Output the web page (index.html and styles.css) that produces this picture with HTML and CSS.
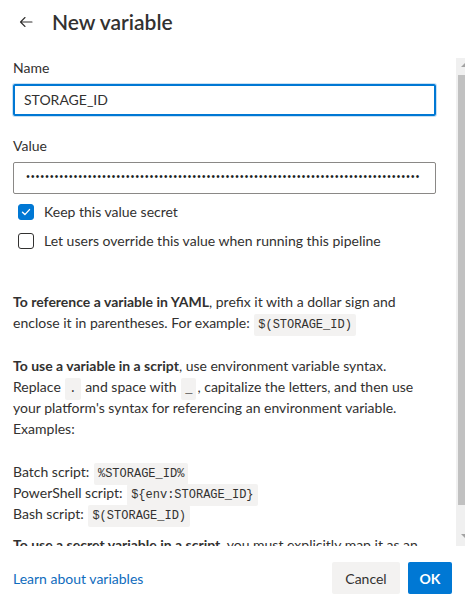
FILE: index.html
```html
<!DOCTYPE html>
<html>
<head>
<meta charset="utf-8">
<link rel="stylesheet" href="styles.css">
</head>
<body>
<div class="panel">
  <header class="header">
    <span class="back"><svg width="14" height="12" viewBox="0 0 14 12"><path d="M13 6 H1.5 M6 1.5 L1.5 6 L6 10.5" fill="none" stroke="#323130" stroke-width="1.1" stroke-linecap="round" stroke-linejoin="round"/></svg></span>
    <h1 class="title">New variable</h1>
  </header>
  <div class="body">
    <main class="scroll">
      <div class="field">
        <label class="label">Name</label>
        <div class="input focused">STORAGE_ID</div>
      </div>
      <div class="field">
        <label class="label">Value</label>
        <div class="input dots">&bull;&bull;&bull;&bull;&bull;&bull;&bull;&bull;&bull;&bull;&bull;&bull;&bull;&bull;&bull;&bull;&bull;&bull;&bull;&bull;&bull;&bull;&bull;&bull;&bull;&bull;&bull;&bull;&bull;&bull;&bull;&bull;&bull;&bull;&bull;&bull;&bull;&bull;&bull;&bull;&bull;&bull;&bull;&bull;&bull;&bull;&bull;&bull;&bull;&bull;&bull;&bull;&bull;&bull;&bull;&bull;&bull;&bull;&bull;&bull;&bull;&bull;&bull;&bull;&bull;&bull;&bull;&bull;&bull;&bull;&bull;&bull;&bull;&bull;&bull;&bull;&bull;&bull;&bull;&bull;&bull;&bull;&bull;</div>
      </div>
      <div class="checks">
        <div class="check">
          <span class="box checked"><svg width="12" height="12" viewBox="0 0 12 12"><path d="M2.5 6.3 L4.9 8.6 L9.5 3.6" fill="none" stroke="#fff" stroke-width="1.4" stroke-linecap="round" stroke-linejoin="round"/></svg></span>
          <span>Keep this value secret</span>
        </div>
        <div class="check">
          <span class="box"></span>
          <span>Let users override this value when running this pipeline</span>
        </div>
      </div>
      <div class="help">
        <p><b>To reference a variable in YAML</b>, prefix it with a dollar sign and enclose it in parentheses. For example: <code>$(STORAGE_ID)</code></p>
        <p><b>To use a variable in a script</b>, use environment variable syntax. Replace <code>.</code> and space with <code>_</code>, capitalize the letters, and then use your platform's syntax for referencing an environment variable. Examples:</p>
        <p class="examples">Batch script: <code>%STORAGE_ID%</code><br>PowerShell script: <code>${env:STORAGE_ID}</code><br>Bash script: <code>$(STORAGE_ID)</code></p>
        <p><b>To use a secret variable in a script</b>, you must explicitly map it as an environment variable.</p>
      </div>
    </main>
    <div class="scrollbar">
      <span class="arrow up"></span>
      <span class="thumb"></span>
      <span class="arrow down"></span>
    </div>
  </div>
  <footer class="footer">
    <a class="link" href="#">Learn about variables</a>
    <div class="buttons">
      <button class="btn cancel">Cancel</button>
      <button class="btn primary">OK</button>
    </div>
  </footer>
</div>
</body>
</html>
```
FILE: styles.css
```css
html, body {
  margin: 0;
  padding: 0;
  background: #fff;
}
body {
  font-family: "Segoe UI", Lato, sans-serif;
  font-size: 14px;
  color: #323130;
}
.panel {
  width: 465px;
  height: 603px;
  display: flex;
  flex-direction: column;
}
.header {
  height: 58px;
  flex: none;
  display: flex;
  align-items: flex-start;
  padding: 7px 0 0 19px;
  box-sizing: border-box;
}
.back {
  width: 33px;
  height: 30px;
  display: flex;
  align-items: center;
}
.back svg {
  display: block;
}
.title {
  margin: 0;
  font-size: 21px;
  font-weight: 600;
  line-height: 30px;
}
.body {
  height: 488px;
  flex: none;
  display: flex;
}
.scroll {
  flex: 1;
  overflow: hidden;
  padding: 0 20px 0 13px;
}
.scrollbar {
  width: 9px;
  flex: none;
  background: #f0f0f0;
  display: flex;
  flex-direction: column;
  align-items: flex-end;
}
.arrow {
  width: 0;
  height: 0;
  border-left: 4px solid transparent;
}
.arrow.up {
  margin-top: 5px;
  border-bottom: 4px solid #a3a3a3;
}
.arrow.down {
  margin-top: 29px;
  border-top: 4px solid #a3a3a3;
}
.thumb {
  margin-top: 8px;
  width: 7px;
  height: 430px;
  background: #c1c1c1;
}
.field {
  margin-bottom: 16px;
}
.label {
  display: block;
  line-height: 20px;
  padding: 0 0 6px 0;
}
.field + .field .label {
  padding-top: 4px;
}
.input {
  height: 32px;
  box-sizing: border-box;
  border: 1px solid #8a8886;
  border-radius: 2px;
  padding: 0 10px;
  line-height: 30px;
  white-space: nowrap;
  overflow: hidden;
}
.input.focused {
  border: 2px solid #0078d4;
  box-shadow: 0 0 0 1px #c7e0f4;
  padding: 0 9px;
  line-height: 28px;
}
.dots {
  font-family: "Liberation Mono", monospace;
  font-size: 10px;
  letter-spacing: -1.25px;
  padding-left: 11px;
  color: #201f1e;
}
.checks {
  margin-top: -8px;
  padding-left: 5px;
  display: flex;
  flex-direction: column;
  gap: 9px;
}
.check {
  display: flex;
  align-items: center;
  gap: 10px;
  line-height: 20px;
}
.box {
  width: 16px;
  height: 16px;
  box-sizing: border-box;
  border: 1px solid #323130;
  border-radius: 3px;
  display: flex;
  align-items: center;
  justify-content: center;
}
.box.checked {
  background: #0078d4;
  border-color: #0078d4;
}
.help {
  margin-top: 40px;
  line-height: 21px;
}
.help p {
  margin: 0 0 22px 0;
}
.help p.examples {
  margin-bottom: 10px;
}
.help b {
  font-weight: 700;
}
code {
  font-family: "Liberation Mono", monospace;
  font-size: 12px;
  line-height: 12px;
  background: #f3f2f1;
  padding: 4px 4px;
  margin: 0 1px;
  border-radius: 2px;
}
.footer {
  flex: none;
  height: 57px;
  box-sizing: border-box;
  padding: 16px 13px 9px 13px;
  display: flex;
  align-items: center;
  justify-content: space-between;
}
.link {
  color: #0f6cbd;
  text-decoration: none;
}
.buttons {
  display: flex;
  gap: 8px;
}
.btn {
  font-family: inherit;
  font-size: 14px;
  height: 32px;
  border: none;
  border-radius: 2px;
  background: #f3f2f1;
  color: #323130;
  padding: 0;
}
.btn.cancel {
  width: 68px;
  font-weight: 400;
}
.btn.primary {
  width: 44px;
  background: #0078d4;
  color: #fff;
  font-weight: 700;
}
```
